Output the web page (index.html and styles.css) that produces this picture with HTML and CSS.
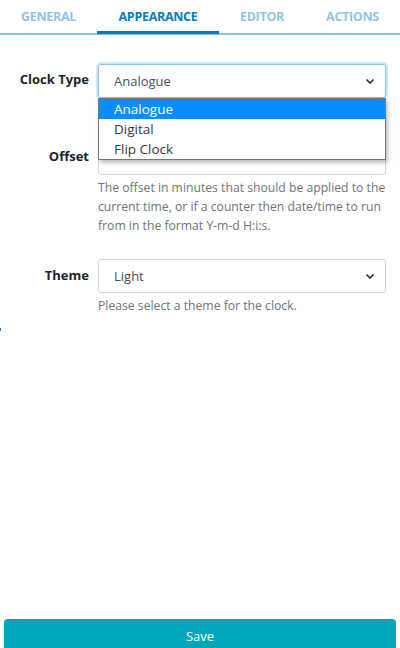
FILE: index.html
```html
<!DOCTYPE html>
<html lang="en">
<head>
    <meta charset="UTF-8">
    <meta name="viewport" content="width=device-width, initial-scale=1.0">
    <title>Clock Settings</title>
    <link rel="stylesheet" href="styles.css">
</head>
<body>
    <!-- Tab navigation -->
    <nav class="tabs">
        <a class="tab">GENERAL</a>
        <a class="tab active">APPEARANCE</a>
        <a class="tab">EDITOR</a>
        <a class="tab">ACTIONS</a>
    </nav>

    <!-- Appearance settings -->
    <form class="settings">
        <div class="row first">
            <label class="label">Clock Type</label>
            <div class="field">
                <div class="select focused">
                    <span>Analogue</span>
                    <svg class="caret" width="10" height="7" viewBox="0 0 10 7"><path d="M1.5 1.5 5 5 8.5 1.5" fill="none" stroke="#333" stroke-width="1.7"/></svg>
                </div>
                <ul class="dropdown">
                    <li class="selected">Analogue</li>
                    <li>Digital</li>
                    <li>Flip Clock</li>
                </ul>
            </div>
        </div>

        <div class="row">
            <label class="label">Offset</label>
            <div class="field">
                <div class="input"></div>
                <p class="help">The offset in minutes that should be applied to the current time, or if a counter then date/time to run from in the format Y-m-d H:i:s.</p>
            </div>
        </div>

        <div class="row">
            <label class="label">Theme</label>
            <div class="field">
                <div class="select">
                    <span>Light</span>
                    <svg class="caret" width="10" height="7" viewBox="0 0 10 7"><path d="M1.5 1.5 5 5 8.5 1.5" fill="none" stroke="#333" stroke-width="1.7"/></svg>
                </div>
                <p class="help">Please select a theme for the clock.</p>
            </div>
        </div>
        <span class="mark"></span>
    </form>

    <button type="button" class="save">Save</button>
</body>
</html>
```

FILE: styles.css
```css
/* Page */
body {
    margin: 0;
    height: 648px;
    font-family: "Open Sans", "Noto Sans", sans-serif;
    font-size: 13px;
    color: #212529;
    background: #fff;
    display: flex;
    flex-direction: column;
    overflow: hidden;
}

/* Tabs */
.tabs {
    display: flex;
    height: 33px;
    border-bottom: 2px solid #8dbfdc;
}
.tab {
    text-align: center;
    line-height: 34px;
    font-size: 12.5px;
    font-weight: 700;
    color: #95c2de;
    letter-spacing: -0.3px;
}
.tab:nth-child(1) { width: 97px; }
.tab:nth-child(2) { width: 122px; }
.tab:nth-child(3) { width: 86px; }
.tab:nth-child(4) { flex: 1; }
.tab.active {
    color: #0b7bb8;
    border-bottom: 3px solid #0b7bb8;
    height: 34px;
    box-sizing: border-box;
}

/* Form */
.settings {
    position: relative;
    flex: 1;
    padding: 29px 14px 0 0;
}
.row {
    display: grid;
    grid-template-columns: 89px 1fr;
    column-gap: 9px;
    margin-bottom: 24px;
}
.row.first {
    margin-bottom: 42px;
}
.label {
    text-align: right;
    font-weight: 700;
    padding-top: 5px;
    line-height: 20px;
}
.row + .row .label {
    padding-top: 6px;
}
.field {
    position: relative;
}
.select, .input {
    box-sizing: border-box;
    height: 34px;
    border: 1px solid #ced4da;
    border-radius: 3px;
    display: flex;
    align-items: center;
    justify-content: space-between;
    padding: 0 10px 0 15px;
    color: #495057;
}
.input {
    height: 35px;
}
.select.focused {
    border-color: #8cc2e6;
    box-shadow: 0 0 0 2px #cfe6f5;
}
.dropdown {
    position: absolute;
    left: 0;
    right: 0;
    top: 34px;
    margin: 0;
    padding: 0;
    list-style: none;
    background: #fff;
    border: 1px solid #767676;
    box-shadow: 2px 3px 4px rgba(0, 0, 0, 0.25);
    z-index: 2;
}
.dropdown li {
    height: 20px;
    line-height: 20px;
    padding-left: 15px;
    font-size: 13.5px;
    color: #3a3a3a;
}
.dropdown li.selected {
    background: #0b8dfd;
    color: #fff;
}
.help {
    margin: 3px 0 0;
    line-height: 19px;
    color: #6c757d;
    font-size: 12.2px;
}
.mark {
    position: absolute;
    left: 0;
    top: 293px;
    width: 1px;
    height: 3px;
    background: #1b87d8;
}

/* Save button */
.save {
    margin: 0 4px;
    height: 34px;
    margin-bottom: -5px;
    border: none;
    border-radius: 4px 4px 0 0;
    background: #00a6ba;
    color: #fff;
    font-family: inherit;
    font-size: 13px;
    padding-bottom: 1px;
}
```
